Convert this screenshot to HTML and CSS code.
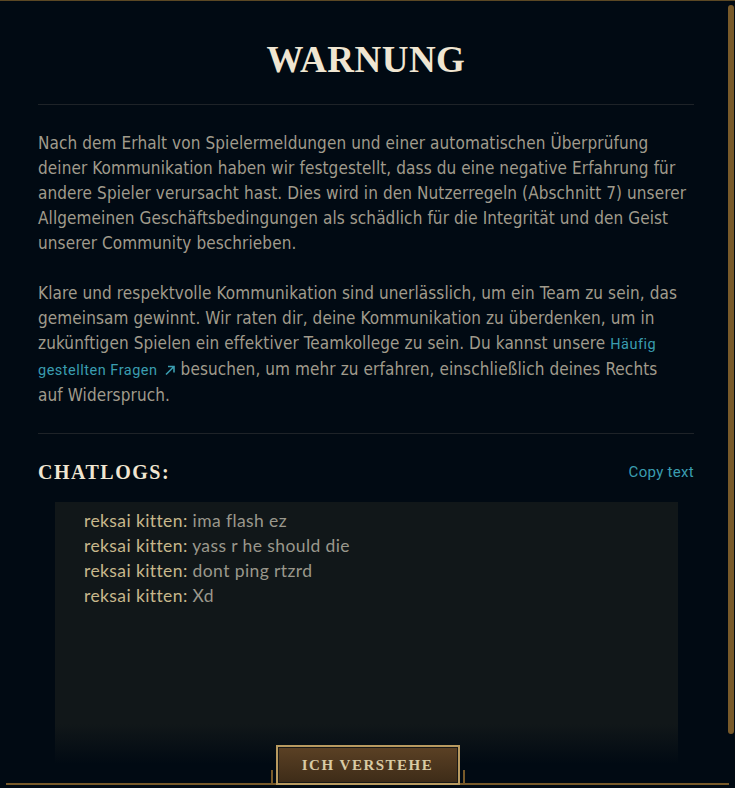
FILE: index.html
```html
<!DOCTYPE html>
<html lang="de">
<head>
<meta charset="utf-8">
<title>Warnung</title>
<link rel="stylesheet" href="styles.css">
</head>
<body>
<div class="frame">
  <div class="content">
    <h1 class="title">WARNUNG</h1>
    <hr class="rule">
    <p class="para">Nach dem Erhalt von Spielermeldungen und einer automatischen Überprüfung<br>deiner Kommunikation haben wir festgestellt, dass du eine negative Erfahrung für<br>andere Spieler verursacht hast. Dies wird in den Nutzerregeln (Abschnitt 7) unserer<br>Allgemeinen Geschäftsbedingungen als schädlich für die Integrität und den Geist<br>unserer Community beschrieben.</p>
    <p class="para">Klare und respektvolle Kommunikation sind unerlässlich, um ein Team zu sein, das<br>gemeinsam gewinnt. Wir raten dir, deine Kommunikation zu überdenken, um in<br>zukünftigen Spielen ein effektiver Teamkollege zu sein. Du kannst unsere <a class="link" href="#">Häufig<br>gestellten Fragen <svg class="ext" viewBox="0 0 12 12" width="12" height="12"><path d="M2 10.5 L10 2.5 M4 2.5 H10 V8.5" fill="none" stroke="currentColor" stroke-width="1.6"/></svg></a> besuchen, um mehr zu erfahren, einschließlich deines Rechts<br>auf Widerspruch.</p>
    <hr class="rule rule-low">
    <div class="chat-head">
      <h2 class="chat-title">CHATLOGS:</h2>
      <a class="copy" href="#">Copy text</a>
    </div>
    <div class="chatbox">
      <div class="line"><span class="name">reksai kitten:</span> <span class="msg">ima flash ez</span></div>
      <div class="line"><span class="name">reksai kitten:</span> <span class="msg">yass r he should die</span></div>
      <div class="line"><span class="name">reksai kitten:</span> <span class="msg">dont ping rtzrd</span></div>
      <div class="line"><span class="name">reksai kitten:</span> <span class="msg">Xd</span></div>
    </div>
  </div>
  <div class="scrollbar"></div>
  <div class="footer">
    <button class="btn" type="button"><span class="btn-inner">ICH VERSTEHE</span></button>
  </div>
</div>
</body>
</html>
```
FILE: styles.css
```css
html, body {
  margin: 0;
  padding: 0;
  background: #010a13;
}
.frame {
  position: relative;
  width: 735px;
  height: 788px;
  overflow: hidden;
  background: #010a13;
  border-top: 1px solid #5b4824;
  box-sizing: border-box;
}
.content {
  padding: 37px 41px 0 38px;
}
.title {
  margin: 0;
  text-align: center;
  font-family: "Liberation Serif", "DejaVu Serif", serif;
  font-weight: 700;
  font-size: 37px;
  line-height: 44px;
  letter-spacing: 0.5px;
  color: #f0e6d2;
}
.rule {
  border: 0;
  height: 1px;
  background: #1e2328;
  margin: 22px 0 0 0;
}
.para {
  margin: 25px -12px 0 0;
  font-family: "DejaVu Sans Condensed", "DejaVu Sans", sans-serif;
  font-stretch: semi-condensed;
  font-size: 17px;
  line-height: 25px;
  letter-spacing: 0.1px;
  color: #a09b8c;
}
.rule + .para {
  margin-top: 26px;
}
.link {
  color: #3a9db0;
  font-family: Roboto, "Noto Sans", sans-serif;
  font-stretch: normal;
  font-size: 14.5px;
  letter-spacing: 0.5px;
  text-decoration: none;
}
.ext {
  margin-left: 2px;
  vertical-align: -1px;
}
.rule-low {
  margin-top: 25px;
}
.chat-head {
  display: flex;
  justify-content: space-between;
  align-items: center;
  margin-top: 26px;
}
.chat-title {
  margin: 0;
  font-family: "Liberation Serif", "DejaVu Serif", serif;
  font-weight: 700;
  font-size: 20px;
  line-height: 24px;
  letter-spacing: 1.5px;
  color: #f0e6d2;
}
.copy {
  font-family: Roboto, "Noto Sans", sans-serif;
  font-size: 15px;
  line-height: 24px;
  color: #3a9db0;
  text-decoration: none;
  letter-spacing: 0.3px;
}
.chatbox {
  margin: 18px 16px 0 17px;
  height: 262px;
  padding: 6px 29px 0 29px;
  box-sizing: border-box;
  background: linear-gradient(to bottom, #111719 0, #111719 222px, #010a13 262px);
  font-family: Lato, "Noto Sans", sans-serif;
  font-size: 17.5px;
  line-height: 25px;
  letter-spacing: 0.4px;
}
.name {
  color: #c8b88c;
}
.msg {
  color: #9a978c;
}
.scrollbar {
  position: absolute;
  top: 4px;
  right: 1px;
  width: 6px;
  height: 729px;
  border-radius: 3px;
  background: #785a2a;
}
.footer {
  position: absolute;
  left: 0;
  right: 0;
  bottom: 3px;
  display: flex;
  justify-content: center;
}
.footer::before {
  content: "";
  position: absolute;
  left: 6px;
  right: 6px;
  bottom: 0;
  height: 2px;
  background: #785a2a;
}
.btn {
  position: relative;
  width: 184px;
  height: 40px;
  padding: 2px;
  margin: 0;
  border: 0;
  background: #b89a60;
  box-sizing: border-box;
  cursor: pointer;
}
.btn::before,
.btn::after {
  content: "";
  position: absolute;
  bottom: 0;
  width: 2px;
  height: 15px;
  background: #785a2a;
}
.btn::before { left: -5px; }
.btn::after { right: -5px; }
.btn-inner {
  display: flex;
  align-items: center;
  justify-content: center;
  height: 100%;
  border: 1px solid #1a1a18;
  box-sizing: border-box;
  background: linear-gradient(to bottom, #5a4024, #3e2c18);
  font-family: "Liberation Serif", "DejaVu Serif", serif;
  font-weight: 700;
  font-size: 15px;
  letter-spacing: 1.5px;
  color: #d9cba4;
}
```
